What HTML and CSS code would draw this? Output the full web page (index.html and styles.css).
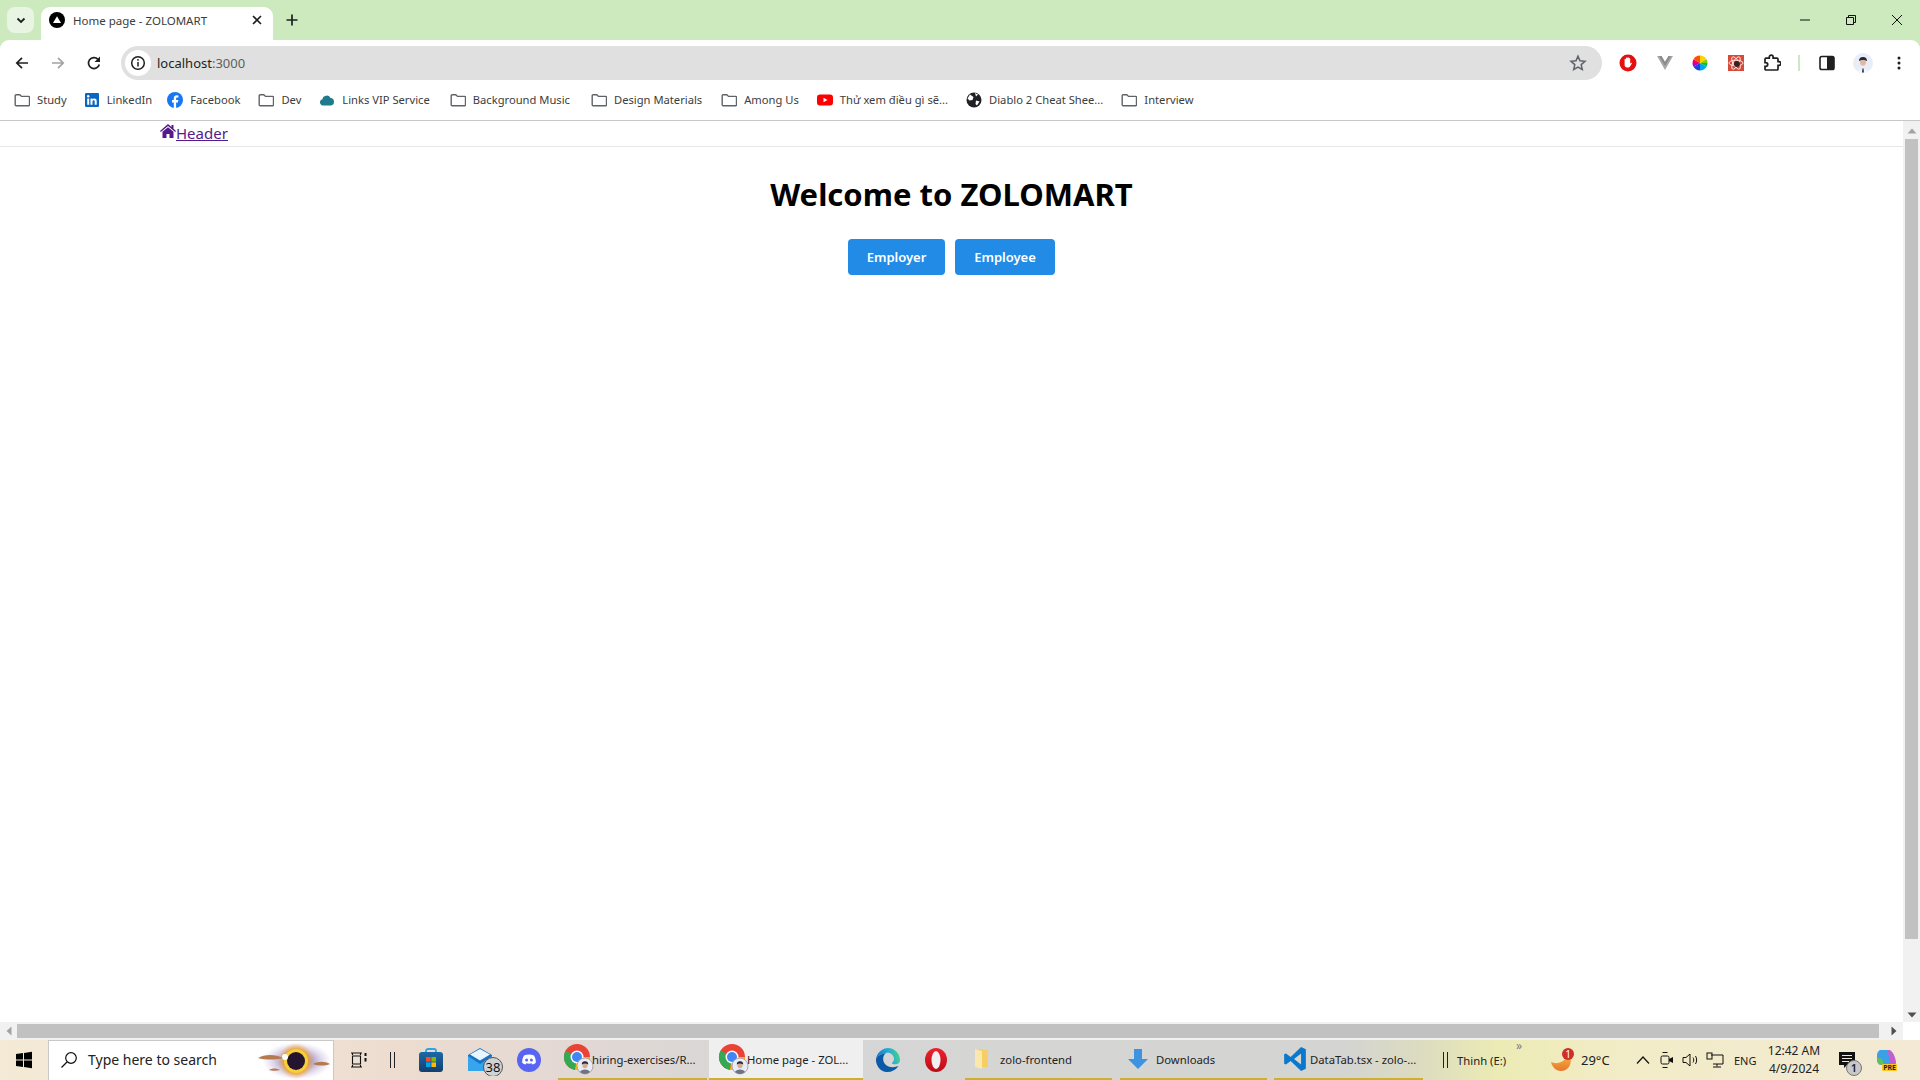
FILE: index.html
```html
<!DOCTYPE html>
<html lang="en">
<head>
<meta charset="utf-8">
<title>Home page - ZOLOMART</title>
<link rel="stylesheet" href="styles.css">
</head>
<body>
<svg class="defs" width="0" height="0" aria-hidden="true">
  <defs>
    <symbol id="folder" viewBox="0 0 16 16"><path d="M1.200 3.600c0-.5.400-.9.900-.9h3.700l1.700 1.700h7.100c.5 0 .9.400.9.900v7.500c0 .5-.4.900-.9.900H2.100c-.5 0-.9-.4-.9-.9z" fill="none" stroke="#5f6368" stroke-width="1.400"/></symbol>
    <symbol id="chrome" viewBox="0 0 32 32">
      <circle cx="14" cy="14" r="13" fill="#ea4335"/>
      <path d="M14 14 2.700 7.500A13 13 0 0 0 12 26.900z" fill="#34a853"/>
      <path d="M14 14h13a13 13 0 0 1-15 12.900z" fill="#fbbc05"/>
      <circle cx="14" cy="14" r="6.500" fill="#fff"/><circle cx="14" cy="14" r="5" fill="#4285f4"/>
      <circle cx="22" cy="23" r="8" fill="#e8ecf6" stroke="#999" stroke-width=".8"/>
      <ellipse cx="22" cy="22" rx="2.600" ry="3.200" fill="#d8ab94"/><path d="M18.800 21.500a3.200 3.200 0 0 1 6.400 0c-1.800-1.200-4.600-1.200-6.400 0z" fill="#2a2530"/><path d="M17 29c1-3.500 9-3.500 10 0a8 8 0 0 1-10 0z" fill="#6d7480"/>
    </symbol>
  </defs>
</svg>
<div class="window">
  <div class="chrome-top">
    <div class="tabstrip">
      <div class="tab-search"><svg width="12" height="12" viewBox="0 0 12 12"><path d="M2.500 4.500 6 8l3.500-3.500" fill="none" stroke="#1f1f1f" stroke-width="1.800"/></svg></div>
      <div class="tab">
        <svg class="favicon" width="16" height="16" viewBox="0 0 16 16"><circle cx="8" cy="8" r="8" fill="#000"/><path d="M8 4.200 12 11H4z" fill="#fff"/></svg>
        <span class="tab-title">Home page - ZOLOMART</span>
        <svg class="tab-close" width="12" height="12" viewBox="0 0 12 12"><path d="M2 2l8 8M10 2l-8 8" stroke="#1f1f1f" stroke-width="1.600"/></svg>
      </div>
      <svg class="newtab" width="14" height="14" viewBox="0 0 14 14"><path d="M7 1.500v11M1.500 7h11" stroke="#1f1f1f" stroke-width="1.700"/></svg>
      <div class="winctl">
        <svg width="12" height="12" viewBox="0 0 12 12"><path d="M1 6h10" stroke="#111" stroke-width="1"/></svg>
        <svg width="12" height="12" viewBox="0 0 12 12"><path d="M1.500 3.500h7v7h-7zM3.500 3.500v-2h7v7h-2" fill="none" stroke="#111" stroke-width="1"/></svg>
        <svg width="12" height="12" viewBox="0 0 12 12"><path d="M1 1l10 10M11 1 1 11" stroke="#111" stroke-width="1"/></svg>
      </div>
    </div>
    <div class="toolbar">
      <div class="nav">
        <svg width="16" height="16" viewBox="0 0 16 16"><path d="M14 8H3M8 2.800 2.800 8 8 13.200" fill="none" stroke="#1f1f1f" stroke-width="1.700"/></svg>
        <svg width="16" height="16" viewBox="0 0 16 16"><path d="M2 8h11M8 2.800 13.200 8 8 13.200" fill="none" stroke="#a3a3a3" stroke-width="1.700"/></svg>
        <svg width="16" height="16" viewBox="0 0 16 16"><path d="M13.300 9.500A5.500 5.500 0 1 1 12 4.300" fill="none" stroke="#1f1f1f" stroke-width="1.700"/><path d="M14 1.500V7H8.500z" fill="#1f1f1f"/></svg>
      </div>
      <div class="omnibox">
        <span class="info"><svg width="16" height="16" viewBox="0 0 16 16"><circle cx="8" cy="8" r="6.300" fill="none" stroke="#1f1f1f" stroke-width="1.500"/><path d="M8 7v4.500" stroke="#1f1f1f" stroke-width="1.500"/><circle cx="8" cy="4.900" r=".9" fill="#1f1f1f"/></svg></span>
        <span class="url">localhost<span class="port">:3000</span></span>
        <svg class="star" width="18" height="18" viewBox="0 0 18 18"><path d="m9 2.200 2 4.600 5 .5-3.800 3.300 1.100 4.900L9 13l-4.300 2.500 1.100-4.900L2 7.300l5-.5z" fill="none" stroke="#5f6368" stroke-width="1.500"/></svg>
      </div>
      <div class="ext">
        <svg width="18" height="18" viewBox="0 0 18 18"><circle cx="9" cy="9" r="8.500" fill="#e50f0f"/><path d="M5.600 8V5.500a.7.700 0 0 1 1.400 0V4.300a.7.700 0 0 1 1.400 0V4a.7.700 0 0 1 1.400 0v.8a.7.700 0 0 1 1.400 0v5l1-1c.6-.4 1 .1.700.6l-1.900 3c-.5.700-1 1-1.900 1H8c-1.400 0-2.400-1-2.400-2.400z" fill="#fff"/></svg>
        <svg width="18" height="18" viewBox="0 0 18 18"><path d="M1 2h4.500L9 8l3.500-6H17L9 16z" fill="#a8a8a8"/><path d="M5.500 2 9 8l3.500-6H15L9 12 3 2z" fill="#8c8c8c"/></svg>
        <svg width="18" height="18" viewBox="0 0 18 18"><circle cx="9" cy="9" r="7.500" fill="#fff"/><path d="M9 9V1.500A7.500 7.500 0 0 1 15.500 5.200z" fill="#ffd400"/><path d="M9 9 15.500 5.200A7.500 7.500 0 0 1 16.500 9z" fill="#7fd000"/><path d="M9 9h7.500a7.500 7.500 0 0 1-1 3.800z" fill="#00c060"/><path d="M9 9l6.500 3.800A7.500 7.500 0 0 1 9 16.500z" fill="#00a8e8"/><path d="M9 9v7.500a7.500 7.500 0 0 1-6.500-3.700z" fill="#2040e0"/><path d="M9 9l-6.500 3.800A7.500 7.500 0 0 1 1.500 9z" fill="#b000d0"/><path d="M9 9H1.500a7.500 7.500 0 0 1 1-3.800z" fill="#f00070"/><path d="M9 9 2.500 5.200A7.500 7.500 0 0 1 9 1.500z" fill="#ff5000"/></svg>
        <svg width="16" height="16" viewBox="0 0 16 16"><rect width="16" height="16" fill="#d9493a"/><g fill="none" stroke="#fff" stroke-width=".8"><ellipse cx="8" cy="8" rx="7" ry="2.800"/><ellipse cx="8" cy="8" rx="7" ry="2.800" transform="rotate(60 8 8)"/><ellipse cx="8" cy="8" rx="7" ry="2.800" transform="rotate(120 8 8)"/></g><circle cx="9" cy="9" r="3" fill="#3a2020"/></svg>
        <svg width="18" height="18" viewBox="0 0 18 18"><path d="M2 5.200c0-.6.400-1 1-1h3.300V3a1.900 1.900 0 0 1 3.800 0v1.200H14c.6 0 1 .4 1 1v2.500h1a1.800 1.800 0 0 1 0 3.600h-1V15c0 .6-.4 1-1 1H3c-.6 0-1-.4-1-1v-2.600h.8a1.900 1.900 0 0 0 0-3.800H2z" fill="none" stroke="#1f1f1f" stroke-width="1.700"/></svg>
        <span class="ext-sep"></span>
        <svg width="16" height="16" viewBox="0 0 16 16"><rect x="1" y="1.500" width="14" height="13" rx="1.800" fill="none" stroke="#1f1f1f" stroke-width="1.600"/><rect x="8" y="1.500" width="7" height="13" fill="#1f1f1f"/></svg>
        <svg width="20" height="20" viewBox="0 0 20 20"><circle cx="10" cy="10" r="10" fill="#e9edf8"/><ellipse cx="10" cy="9" rx="3" ry="3.800" fill="#e2b9a0"/><path d="M6 8a4 4 0 0 1 8 0c-2-1.500-6-1.500-8 0z" fill="#1e2a3a"/><path d="M5 19c.7-4 9.300-4 10 0a10 10 0 0 1-10 0z" fill="#f5f6fa"/><path d="M9.400 15.500h1.200l.4 4H9z" fill="#2a3a5a"/></svg>
        <svg width="16" height="16" viewBox="0 0 16 16"><circle cx="8" cy="3" r="1.500" fill="#1f1f1f"/><circle cx="8" cy="8" r="1.500" fill="#1f1f1f"/><circle cx="8" cy="13" r="1.500" fill="#1f1f1f"/></svg>
      </div>
    </div>
    <div class="bookmarks">
      <span class="bm bm-study"><svg class="bi"><use href="#folder"/></svg>Study</span>
      <span class="bm bm-linkedin"><svg class="bi" viewBox="0 0 16 16"><rect x="1" y="1" width="14" height="14" rx="1" fill="#0a66c2"/><path d="M3.200 6.500h2v6.300h-2zM6.500 6.500h1.900v.9c.9-1.500 4.300-1.600 4.300 1.500v3.900h-2V9.500c0-1.600-2.200-1.500-2.200 0v3.300h-2z" fill="#fff"/><circle cx="4.200" cy="4.300" r="1.200" fill="#fff"/></svg>LinkedIn</span>
      <span class="bm"><svg class="bi" viewBox="0 0 16 16"><circle cx="8" cy="8" r="8" fill="#1877f2"/><path d="M6.800 16V10.500H5V8h1.800V6.400c0-2 1.200-3.100 3-3.100l1.600.2v2H10.300c-.9 0-1.200.6-1.200 1.200V8h2.200l-.4 2.500H9.100V16z" fill="#fff"/></svg>Facebook</span>
      <span class="bm"><svg class="bi"><use href="#folder"/></svg>Dev</span>
      <span class="bm bm-links"><svg class="bi" viewBox="0 0 16 16"><path d="M4 13.500a3.200 3.200 0 0 1-.6-6.300A4.300 4.300 0 0 1 11.500 6a3.800 3.800 0 0 1 .5 7.500z" fill="#1f7a8c"/></svg>Links VIP Service</span>
      <span class="bm bm-music"><svg class="bi"><use href="#folder"/></svg>Background Music</span>
      <span class="bm bm-design"><svg class="bi"><use href="#folder"/></svg>Design Materials</span>
      <span class="bm"><svg class="bi"><use href="#folder"/></svg>Among Us</span>
      <span class="bm"><svg class="bi" viewBox="0 0 16 16"><rect y="2.500" width="16" height="11" rx="3" fill="#f00"/><path d="M6.500 5.700 10.500 8l-4 2.300z" fill="#fff"/></svg>Thử xem điều gì sẽ...</span>
      <span class="bm"><svg class="bi" viewBox="0 0 16 16"><circle cx="8" cy="8" r="7.500" fill="#202124"/><path d="M4 2.500 7.500 5 6.500 8l-3 .5-2-2zM10 8.500l3.500 1-2.500 4-1.500-1.500zM9 1l3 1.500-2 2z" fill="#fff"/></svg>Diablo 2 Cheat Shee...</span>
      <span class="bm"><svg class="bi"><use href="#folder"/></svg>Interview</span>
    </div>
  </div>

  <div class="viewport">
    <div class="page-row">
      <main class="page">
        <header class="site-header">
          <a class="home-link" href="#"><svg width="16" height="14" viewBox="0 0 16 14"><path d="M8 0 0 7l.8 1L8 2l7.200 6 .8-1-2.500-2.200V1h-2v2zM8 3.200 2.500 7.800V14h4v-4h3v4h4V7.800z" fill="#551a8b"/></svg><span class="home-text">Header</span></a>
        </header>
        <section class="hero">
          <h1>Welcome to ZOLOMART</h1>
          <div class="actions">
            <button class="btn btn-employer">Employer</button>
            <button class="btn btn-employee">Employee</button>
          </div>
        </section>
      </main>
      <div class="vscroll">
        <svg width="10" height="6" viewBox="0 0 10 6"><path d="M5 .5 9.500 5.500H.5z" fill="#a3a3a3"/></svg>
        <div class="vthumb"></div>
        <svg class="vdown" width="10" height="6" viewBox="0 0 10 6"><path d="M5 5.500 9.500.5H.5z" fill="#505050"/></svg>
      </div>
    </div>
    <div class="hscroll">
      <svg width="6" height="10" viewBox="0 0 6 10"><path d="M.5 5 5.500.5v9z" fill="#a3a3a3"/></svg>
      <div class="hthumb"></div>
      <svg width="6" height="10" viewBox="0 0 6 10"><path d="M5.500 5 .5.500v9z" fill="#505050"/></svg>
    </div>
  </div>

  <footer class="taskbar">
    <div class="start"><svg width="18" height="18" viewBox="0 0 18 18"><path d="M1 3l7-1v6.500H1zM9 1.900 17 .8v7.700H9zM1 9.500h7V16l-7-1zM9 9.500h8v7.700l-8-1.100z" fill="#000"/></svg></div>
    <div class="search">
      <svg width="18" height="18" viewBox="0 0 18 18"><circle cx="11" cy="7" r="5.300" fill="none" stroke="#111" stroke-width="1.200"/><path d="M7 11 1.500 16.500" stroke="#111" stroke-width="1.300"/></svg>
      <span class="search-text">Type here to search</span>
      <svg class="eclipse" width="78" height="40" viewBox="0 0 78 40">
        <defs>
          <radialGradient id="haze"><stop offset=".3" stop-color="#7f6aa0" stop-opacity=".85"/><stop offset="1" stop-color="#c9b8e0" stop-opacity="0"/></radialGradient>
          <radialGradient id="glow"><stop offset=".62" stop-color="#f2a020"/><stop offset="1" stop-color="#f0b070" stop-opacity="0"/></radialGradient>
        </defs>
        <ellipse cx="42" cy="20" rx="35" ry="19" fill="url(#haze)"/>
        <circle cx="41" cy="20" r="18" fill="url(#glow)"/>
        <circle cx="41" cy="20" r="12" fill="#f6cf3a"/><circle cx="41" cy="20" r="9" fill="#241430"/>
        <circle cx="30" cy="16" r="3" fill="#fff"/>
        <path d="M3 17c6-4 18-4 25 0-7 2-18 2-25 0zM58 23c5-3 12-3 17 0-5 2-12 2-17 0zM14 29c3-2 8-2 11 0-3 1-8 1-11 0z" fill="#b57a50"/>
      </svg>
    </div>
    <div class="slot slot-taskview"><svg width="18" height="18" viewBox="0 0 18 18"><path d="M1 2h11M1 16h11M2.500 2v2M10.500 2v2M2.500 14v2M10.500 14v2M2.500 5h8v8h-8z" fill="none" stroke="#111" stroke-width="1.100"/><path d="M15.500 2v3M15.500 7v3.500" stroke="#111" stroke-width="2"/></svg></div>
    <div class="slot slot-sep"><span class="bars"></span></div>
    <div class="slot slot-store"><svg width="24" height="24" viewBox="0 0 24 24"><defs><linearGradient id="store" x1="0" y1="0" x2="0" y2="1"><stop offset="0" stop-color="#1a6aa8"/><stop offset="1" stop-color="#143e6e"/></linearGradient></defs><path d="M7 7V3a2 2 0 0 1 2-2h6a2 2 0 0 1 2 2v4" fill="none" stroke="#2aa5e5" stroke-width="1.800"/><rect y="4" width="24" height="20" rx="3" fill="url(#store)"/><rect x="7" y="9" width="4.600" height="4.600" fill="#f25022"/><rect x="12.400" y="9" width="4.600" height="4.600" fill="#7fba00"/><rect x="7" y="14.400" width="4.600" height="4.600" fill="#00a4ef"/><rect x="12.400" y="14.400" width="4.600" height="4.600" fill="#ffb900"/></svg></div>
    <div class="slot slot-mail"><svg width="38" height="32" viewBox="0 0 38 32"><path d="M2 11 14 4l12 7v16H2z" fill="#1572c6"/><path d="M2 12l12 8 12-8v15H2z" fill="#35a5ee"/><path d="M4 10.500 14 5l10 5.500-10 6z" fill="#eaf6ff"/><circle cx="27" cy="23" r="9.500" fill="#cfd3d6" stroke="#555"/></svg><span class="mail-badge">38</span></div>
    <div class="slot slot-discord"><svg width="24" height="24" viewBox="0 0 24 24"><circle cx="12" cy="12" r="12" fill="#5865f2"/><path d="M7 7.500c3-1.200 7-1.200 10 0 1.300 2.400 2 4.800 1.800 7.300-1.300 1-2.400 1.500-3.400 1.700l-.8-1.300c-1.700.6-3.500.6-5.200 0l-.8 1.300c-1-.2-2.100-.7-3.400-1.700C5 12.300 5.700 9.900 7 7.500z" fill="#fff"/><circle cx="9.600" cy="12" r="1.500" fill="#5865f2"/><circle cx="14.400" cy="12" r="1.500" fill="#5865f2"/></svg></div>
    <div class="task task-hiring"><svg class="ti"><use href="#chrome"/></svg><span>hiring-exercises/R...</span></div>
    <div class="task task-home"><svg class="ti"><use href="#chrome"/></svg><span>Home page - ZOL...</span></div>
    <div class="slot slot-edge"><svg width="26" height="26" viewBox="0 0 26 26"><defs><linearGradient id="edge" x1="0" y1=".6" x2="1" y2=".4"><stop offset="0" stop-color="#1478c8"/><stop offset=".55" stop-color="#25a8d8"/><stop offset="1" stop-color="#48d28a"/></linearGradient></defs><path d="M1 12C2 5 8 1 13 1c7 0 12 6 12 12 0 4-4 5-7 4-2.500-.8 1-2 1-5 0-4-4-7-8-6C6 7 2 9 1 12z" fill="url(#edge)"/><path d="M1 12c1-3 5-5 10-6-3 2-4 7-1 11 3 3.500 9 4 13.500 2-3 4.500-8 6.500-12.500 6C5 24.500 .5 18 1 12z" fill="#0b5aa8"/></svg></div>
    <div class="slot slot-opera"><svg width="24" height="26" viewBox="0 0 24 26"><defs><linearGradient id="opera" x1="0" y1="0" x2="0" y2="1"><stop offset="0" stop-color="#f0202c"/><stop offset="1" stop-color="#b80d18"/></linearGradient></defs><ellipse cx="12" cy="13" rx="11" ry="12" fill="url(#opera)"/><ellipse cx="12" cy="13" rx="4.500" ry="9" fill="#f0f0f0"/></svg></div>
    <div class="task task-zolo"><svg width="14" height="22" viewBox="0 0 14 22"><path d="M0 1h7l1 1h5v17H7z" fill="#f5cf63"/><path d="M0 1l7 2v18l-7-2z" fill="#fbe8ac"/></svg><span>zolo-frontend</span></div>
    <div class="task task-downloads"><svg width="20" height="22" viewBox="0 0 20 22"><path d="M6 1h8v10h6L10 21 0 11h6z" fill="#3d93e0"/></svg><span>Downloads</span></div>
    <div class="task task-datatab"><svg width="26" height="26" viewBox="0 0 24 24"><path fill-rule="evenodd" d="M17.600 1 8 10.200 3.600 6.900 2 7.700v8.600l1.600.8L8 13.800 17.600 23 22 21V3zM17.600 7v10l-6.500-5z" fill="#0a78cc"/></svg><span>DataTab.tsx - zolo-...</span></div>
    <div class="deskband"><span class="bars"></span><span>Thinh (E:)</span><span class="more">»</span></div>
    <div class="weather">
      <svg width="28" height="28" viewBox="0 0 28 28"><defs><linearGradient id="moon" x1="0" y1="0" x2="0" y2="1"><stop offset="0" stop-color="#f8bc45"/><stop offset="1" stop-color="#e8762a"/></linearGradient></defs><path d="M4 16c6 3 15 0 18-9 4 6 2 18-8 18-5 0-9-4-10-9z" fill="url(#moon)"/><circle cx="21" cy="8" r="6" fill="#cf2e2a"/></svg>
      <span class="weather-badge">1</span>
      <span>29°C</span>
    </div>
    <div class="tray">
      <svg class="tray-up" width="14" height="10" viewBox="0 0 14 10"><path d="M1 8.500 7 2l6 6.500" fill="none" stroke="#111" stroke-width="1.200"/></svg>
      <svg class="tray-meet" width="14" height="18" viewBox="0 0 14 18"><path d="M2.500 1.500h5M2.500 16.500h5" stroke="#111"/><rect x="1" y="5" width="8" height="8" rx="1.500" fill="none" stroke="#111"/><path d="M9 8l4-2v6l-4-2z" fill="#111"/></svg>
      <svg class="tray-vol" width="18" height="16" viewBox="0 0 18 16"><path d="M1 5.500h3L8 2v12l-4-3.500H1z" fill="none" stroke="#111"/><path d="M11 5.500c1 1.500 1 3.500 0 5M13.500 4c1.500 2.500 1.500 5.500 0 8" fill="none" stroke="#111"/></svg>
      <svg class="tray-net" width="18" height="16" viewBox="0 0 18 16"><path d="M5 3h12v9H7M11 12v2.500M7 15h8" fill="none" stroke="#111"/><rect x="1" y="1" width="5" height="6" fill="none" stroke="#111"/></svg>
      <span class="lang">ENG</span>
      <div class="clock"><span>12:42 AM</span><span>4/9/2024</span></div>
      <div class="notif"><svg width="20" height="20" viewBox="0 0 20 20"><path d="M2 2h16v13H10l-3 3v-3H2z" fill="#111"/><path d="M5 5.500h10M5 8.500h10M5 11.500h7" stroke="#f3e9d5"/></svg><span class="notif-badge">1</span></div>
      <svg class="copilot" width="22" height="26" viewBox="0 0 22 26"><path d="M6 3h7c3 0 4 3 5 6l3 7c0 2-2 2-4 2H7c-3 0-5-3-5-5V8c0-3 2-5 4-5z" fill="#3aa0e8"/><path d="M12 3h2c3 0 7 7 7 13h-6c-1-5-1-9-3-13z" fill="#c060d0"/><path d="M2 11c2 0 5 0 6 3l1 4H6c-3 0-4-3-4-7z" fill="#60c060"/><rect x="7" y="17" width="15" height="7" rx="1" fill="#ffc81e"/></svg><span class="pre">PRE</span>
    </div>
  </footer>
</div>
</body>
</html>
```
FILE: styles.css
```css
* { box-sizing: border-box; }
html, body { margin: 0; height: 100%; overflow: hidden; }
body { font-family: "Noto Sans", "Open Sans", sans-serif; color: #1f1f1f; background: #fff; }
.defs { position: absolute; }
.window { height: 1080px; display: flex; flex-direction: column; }
svg { display: block; flex: none; }

.chrome-top { background: #cdeabf; height: 121px; flex: none; }
.tabstrip { height: 40px; display: flex; align-items: flex-end; }
.tab-search { width: 27px; height: 26px; margin: 0 0 7px 7px; background: #e8f5e2; border-radius: 8px; display: flex; align-items: center; justify-content: center; }
.tab { width: 232px; height: 33px; margin-left: 7px; background: #fff; border-radius: 9px 9px 0 0; display: flex; align-items: center; padding: 0 10px 7px 8px; font-size: 11.500px; color: #3c3c3c; }
.favicon { margin-right: 8px; }
.tab-title { flex: 1; white-space: nowrap; }
.newtab { margin: 0 0 13px 12px; }
.winctl { margin: 0 17px 14px auto; display: flex; gap: 34px; }

.toolbar { height: 46px; background: #fff; border-radius: 9px 9px 0 0; display: flex; align-items: center; padding: 0 0 0 14px; }
.nav { display: flex; gap: 20px; width: 107px; flex: none; }
.omnibox { width: 1481px; height: 34px; background: #e0e0e0; border-radius: 17px; display: flex; align-items: center; padding: 0 15px 0 4px; flex: none; }
.info { width: 26px; height: 26px; background: #fff; border-radius: 50%; display: flex; align-items: center; justify-content: center; margin-right: 6px; }
.url { flex: 1; font-size: 13px; color: #1f1f1f; }
.port { color: #5f5f5f; }
.ext { display: flex; align-items: center; margin-left: 17px; }
.ext svg { margin-right: 18px; }
.ext svg:nth-of-type(2) { margin-left: 1px; margin-right: 17px; }
.ext svg:nth-of-type(4) { margin-left: 1px; margin-right: 18px; }
.ext svg:nth-of-type(5) { margin-left: 1px; }
.ext-sep { width: 2px; height: 16px; background: #cdeabf; margin: 0 19px 0 -1px; }

.bookmarks { height: 35px; background: #fff; border-bottom: 1px solid #c7c7c7; display: flex; align-items: center; padding: 0 0 7px 14px; font-size: 11.200px; color: #3c3c3c; }
.bm { display: flex; align-items: center; margin-right: 18px; white-space: nowrap; }
.bm-study { margin-right: 17px; }
.bm-linkedin { margin-right: 15px; }
.bm-links { margin-right: 20px; }
.bm-music { margin-right: 21px; }
.bm-design { margin-right: 19px; }
.bi { width: 16px; height: 16px; margin-right: 7px; }

.viewport { flex: 1; display: flex; flex-direction: column; min-height: 0; }
.page-row { flex: 1; display: flex; min-height: 0; }
.page { flex: 1; min-width: 0; }
.site-header { height: 26px; border-bottom: 1px solid #e5e7eb; padding: 0 0 2px 160px; display: flex; align-items: center; }
.home-link { display: flex; align-items: flex-end; color: #551a8b; font-size: 15px; font-family: "Noto Sans", sans-serif; }
.home-link svg { margin-bottom: 5px; }
.home-text { text-decoration: underline; line-height: 20px; }
.hero { display: flex; flex-direction: column; align-items: center; }
h1 { margin: 25px 0 23px; font-size: 31px; line-height: 44px; font-weight: 700; color: #000; }
.actions { display: flex; gap: 10px; }
.btn { height: 36px; padding: 0 12px; border: 0; border-radius: 4px; background: #228be6; color: #fff; font: 600 13px "Noto Sans", sans-serif; }
.btn-employer { width: 97px; }
.btn-employee { width: 100px; }

.vscroll { width: 17px; background: #f1f1f1; display: flex; flex-direction: column; align-items: center; padding-top: 7px; }
.vthumb { width: 13px; height: 800px; margin-top: 5px; background: #c1c1c1; }
.vdown { margin-top: auto; margin-bottom: 4px; }
.hscroll { height: 18px; flex: none; margin-right: 17px; background: #f1f1f1; display: flex; align-items: center; padding: 0 6px; }
.hthumb { width: 1862px; height: 14px; margin: 0 12px 0 5px; background: #c1c1c1; }

.taskbar { height: 40px; flex: none; display: flex; align-items: stretch; font-size: 11.300px; color: #222; background: linear-gradient(90deg, #f4ead6 0%, #ecdcd0 22%, #e2d8d4 30%, #d6d6d6 40%, #d4d4d2 70%, #dcdcc0 74%, #ecebb4 78%, #f2ecc6 84%, #f3e9d5 100%); }
.start { width: 48px; display: flex; align-items: center; justify-content: center; }
.search { width: 286px; background: #fff; border: 1px solid #c8c8c8; border-bottom: 0; display: flex; align-items: center; padding: 0 0 2px 11px; font-size: 14px; position: relative; overflow: hidden; }
.search-text { margin-left: 10px; }
.eclipse { position: absolute; right: 0; top: 0; }
.slot { display: flex; align-items: center; justify-content: center; position: relative; }
.slot-taskview { width: 48px; padding-left: 2px; }
.slot-sep { width: 20px; }
.bars { display: block; width: 5px; height: 16px; border-left: 1px solid #222; border-right: 1px solid #222; }
.slot-store { width: 46px; margin-left: 6px; }
.slot-mail { width: 46px; margin-left: 4px; justify-content: flex-start; padding-left: 8px; }
.mail-badge { position: absolute; left: 25px; top: 19px; width: 20px; text-align: center; font-size: 13px; line-height: 16px; color: #111; }
.slot-discord { width: 46px; margin-left: 2px; }
.task { display: flex; align-items: center; border-bottom: 2px solid #cdb02b; white-space: nowrap; }
.ti { width: 32px; height: 32px; }
.task-hiring { width: 149px; margin-left: 6px; padding-left: 5px; }
.task-hiring span, .task-home span { margin-left: -3px; }
.task-home { width: 154px; margin-left: 2px; padding-left: 9px; background: #efefef; }
.slot-edge { width: 47px; margin-left: 1px; }
.slot-opera { width: 48px; padding-left: 2px; }
.task-zolo { width: 147px; margin-left: 6px; padding-left: 10px; }
.task-zolo span { margin-left: 11px; }
.task-downloads { width: 147px; margin-left: 8px; padding-left: 8px; }
.task-downloads span { margin-left: 8px; }
.task-datatab { width: 149px; margin-left: 7px; padding-left: 8px; }
.task-datatab span { margin-left: 2px; }
.deskband { width: 90px; margin-left: 20px; display: flex; align-items: center; gap: 9px; position: relative; }
.more { position: absolute; left: 73px; top: -3px; color: #77779a; font-size: 12px; }
.weather { width: 64px; margin-left: 14px; display: flex; align-items: center; gap: 6px; font-size: 13px; position: relative; }
.weather-badge { position: absolute; left: 15px; top: 8px; width: 12px; text-align: center; color: #fff; font-size: 10px; line-height: 12px; }
.tray { flex: 1; display: flex; align-items: center; padding-left: 25px; font-size: 12px; position: relative; }
.tray-meet { margin-left: 10px; }
.tray-vol { margin-left: 8px; }
.tray-net { margin-left: 6px; }
.lang { margin-left: 10px; font-size: 11px; width: 22px; }
.clock { display: flex; flex-direction: column; align-items: center; line-height: 18px; margin-left: 8px; width: 60px; font-size: 12px; }
.notif { margin-left: 13px; position: relative; width: 26px; }
.notif-badge { position: absolute; left: 9px; top: 10px; width: 16px; height: 16px; border-radius: 50%; background: #c8c8c8; border: 1px solid #777; text-align: center; line-height: 14px; font-size: 11px; font-weight: 600; }
.copilot { margin-left: 12px; }
.pre { position: absolute; right: 24px; top: 24px; color: #222; font-size: 7px; font-weight: 700; line-height: 8px; }
```
